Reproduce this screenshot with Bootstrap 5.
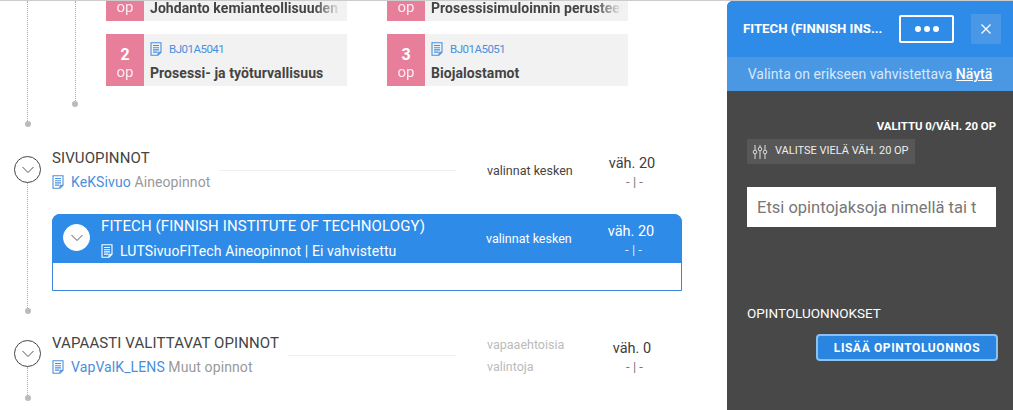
<!DOCTYPE html>
<html lang="fi">
<head>
<meta charset="UTF-8">
<meta name="viewport" content="width=device-width">
<link href="https://cdn.jsdelivr.net/npm/bootstrap@5.3.3/dist/css/bootstrap.min.css" rel="stylesheet">
<title>Opintosuunnitelma</title>
<style>
  html, body { height: 410px; overflow: hidden; }
  body { font-family: Roboto, "Liberation Sans", sans-serif; color: #444; border-top: 1px solid #ccc; background: #fff; }
  .plan-main { width: 727px; flex: none; }
  .plan-side { width: 286px; flex: none; height: 410px; background: #484848; border-top-left-radius: 6px; overflow: hidden; }

  .rail { flex: none; display: flex; flex-direction: column; align-items: flex-start; }
  .rail-outer { width: 52px; padding-left: 14px; }
  .rail-inner { width: 48px; padding-left: 20px; }
  .rail-line { flex: 1 1 auto; width: 0; border-left: 1px dotted #aaa; margin-left: 13px; }
  .rail-inner .rail-line { margin-left: 3px; }
  .rail-dot { width: 6px; height: 6px; border-radius: 50%; background: #bbb; margin-left: 10.5px; flex: none; }
  .rail-inner .rail-dot { margin-left: 0; }
  .circle-btn { width: 27px; height: 27px; flex: none; border: 1px solid #444; border-radius: 50%; background: #fff; color: #555; display: flex; align-items: center; justify-content: center; padding: 0; }

  .tile-wrap { margin-top: -32px; margin-left: 6px; display: grid; grid-template-columns: 241px 241px; grid-auto-rows: 52px; column-gap: 40px; row-gap: 13px; }
  .tile { height: 52px; background: #f2f2f2; display: flex; }
  .tile-op { width: 38px; flex: none; background: #e77f9b; color: #fff; text-align: center; line-height: 1; padding-top: 13px; }
  .tile-op b { display: block; font-size: 16px; margin-bottom: 1px; }
  .tile-op span { font-size: 15px; opacity: .85; }
  .tile-body { padding: 7px 6px 0 6px; min-width: 0; flex: 1; }
  .tile-code { font-size: 11.5px; letter-spacing: -.5px; color: #4a8fdc; line-height: 16px; display: flex; align-items: center; gap: 7px; }
  .tile-name { font-size: 14px; letter-spacing: .07px; font-weight: 700; line-height: 20px; margin-top: 6px; white-space: nowrap; overflow: hidden; color: #444; -webkit-mask-image: linear-gradient(90deg, #000 86%, transparent); mask-image: linear-gradient(90deg, #000 86%, transparent); }
  .tile-name.full { -webkit-mask-image: none; mask-image: none; }

  .sec-title { font-size: 15px; letter-spacing: .1px; line-height: 24px; color: #444; white-space: nowrap; }
  .sec-sub { font-size: 14px; letter-spacing: .1px; line-height: 24px; color: #999; display: flex; align-items: center; gap: 7px; white-space: nowrap; }
  .sec-sub a { color: #4a8fdc; text-decoration: none; }
  .sec-rule { flex: 1; border-top: 1px solid #eee; margin: 24px 0 0 9px; align-self: flex-start; }
  .sec-info { width: 404px; flex: none; display: flex; }
  .sec-state { font-size: 12.5px; margin-left: 31px; width: 113px; flex: none; line-height: 22px; }
  .sec-state.muted { color: #bbb; }
  .sec-val { width: 64px; flex: none; text-align: center; font-size: 14.5px; line-height: 20px; color: #3c3c3c; margin-top: 8px; }
  .sec-val small { display: block; font-size: 13px; line-height: 15px; color: #777; padding-left: 5px; }

  .fi-card { margin-top: 20px; width: 630px; border: 1px solid #3a85d8; border-radius: 8px 8px 0 0; height: 77px; }
  .fi-head { background: #2f8be8; color: #fff; height: 49px; margin: -1px -1px 0; border-radius: 8px 8px 0 0; display: flex; padding-left: 11px; }
  .fi-head .circle-btn { margin-top: 10px; border-color: #fff; margin-right: 11px; }
  .fi-info { flex: 1; min-width: 0; }
  .fi-info .sec-title { color: #fff; line-height: 25px; }
  .fi-info .sec-sub { color: #fff; line-height: 24px; }
  .fi-head .sec-state { margin-left: 0; align-self: center; color: #fff; }
  .fi-head .sec-val { margin-top: 0; margin-right: 19px; padding-top: 1px; align-self: center; color: #fff; }
  .fi-head .sec-val small { color: #dceaf9; }

  .side-head { height: 56px; background: #2f8be8; display: flex; align-items: center; padding: 0 12px 0 16px; color: #fff; }
  .side-title { font-size: 13.2px; font-weight: 700; width: 156px; flex: none; white-space: nowrap; }
  .more-btn { width: 55px; height: 28px; border: 2px solid #fff; border-radius: 2px; background: transparent; color: #fff; display: flex; align-items: center; justify-content: center; gap: 3px; padding: 0; }
  .more-btn i { width: 6px; height: 6px; border-radius: 50%; background: #fff; display: block; }
  .close-btn { width: 30px; height: 30px; margin-left: 17px; border: 0; background: #4a97e6; display: flex; align-items: center; justify-content: center; padding: 0; }
  .side-note { height: 34px; background: #4a97e4; color: #d6e8fb; font-size: 14px; letter-spacing: .02px; text-align: center; line-height: 35px; }
  .side-note a { color: #fff; font-weight: 500; }
  .side-body { padding: 27px 17px 0 20px; color: #fff; }
  .side-count { font-size: 11.4px; font-weight: 700; text-align: right; line-height: 16px; }
  .side-chip { display: inline-flex; align-items: center; gap: 7px; height: 25px; background: #575757; font-size: 11px; padding: 0 6px 0 5px; margin-top: 5px; color: #eee; vertical-align: top; }
  .side-search { display: block; margin-top: 23px; width: 249px; height: 40px; border: 0; border-radius: 0; padding: 0 20px 0 10px; font-family: inherit; font-size: 16.5px; background: #fff; }
  .side-search::placeholder { color: #777; opacity: 1; }
  .side-drafts { font-size: 13.5px; margin-top: 76px; line-height: 20px; }
  .draft-btn { display: block; margin: 11px -2px 0 auto; width: 182px; height: 27px; background: #2a85e0; border: 2px solid #8cc0ee; border-radius: 4px; color: #fff; font-size: 12px; font-weight: 700; letter-spacing: .6px; line-height: 1; padding: 0; }
</style>
</head>
<body class="d-flex">
<svg width="0" height="0" class="position-absolute">
  <symbol id="doc" viewBox="0 0 12 14"><path d="M1 .8h10v9.4L8 13.2H1zM3 3.5h6M3 5.7h6M3 7.9h6M3 10.1h4M11 10.2H8v3" fill="none" stroke="currentColor" stroke-width="1.1"/></symbol>
  <symbol id="chev" viewBox="0 0 14 8"><path d="M1.5 1l5.5 5.5L12.5 1" fill="none" stroke="currentColor" stroke-width="1"/></symbol>
</svg>

<main class="plan-main">
  <div class="d-flex" style="height:126px">
    <div class="rail rail-outer"><div class="rail-line"></div><div class="rail-dot"></div></div>
    <div class="flex-grow-1">
      <div class="d-flex" style="height:106px">
        <div class="rail rail-inner"><div class="rail-line"></div><div class="rail-dot"></div></div>
        <div class="tile-wrap">
          <div class="tile"><div class="tile-op"><b>2</b><span>op</span></div><div class="tile-body"><div class="tile-code"><svg width="12" height="14"><use href="#doc"/></svg>BJ01A5031</div><div class="tile-name">Johdanto kemianteollisuuden perusteisiin</div></div></div>
          <div class="tile"><div class="tile-op"><b>3</b><span>op</span></div><div class="tile-body"><div class="tile-code"><svg width="12" height="14"><use href="#doc"/></svg>BJ01A5032</div><div class="tile-name">Prosessisimuloinnin perusteet ja harjoitukset</div></div></div>
          <div class="tile"><div class="tile-op"><b>2</b><span>op</span></div><div class="tile-body"><div class="tile-code"><svg width="12" height="14"><use href="#doc"/></svg>BJ01A5041</div><div class="tile-name full">Prosessi- ja työturvallisuus</div></div></div>
          <div class="tile"><div class="tile-op"><b>3</b><span>op</span></div><div class="tile-body"><div class="tile-code"><svg width="12" height="14"><use href="#doc"/></svg>BJ01A5051</div><div class="tile-name full">Biojalostamot</div></div></div>
        </div>
      </div>
    </div>
  </div>

  <section class="d-flex" style="margin-top:19px;height:168px">
    <div class="rail rail-outer" style="padding-top:10px"><button class="circle-btn" aria-label="Avaa"><svg width="14" height="8"><use href="#chev"/></svg></button><div class="rail-line"></div><div class="rail-dot"></div></div>
    <div>
      <div class="d-flex align-items-start">
        <div class="sec-info">
          <div><div class="sec-title">SIVUOPINNOT</div><div class="sec-sub"><svg width="12" height="14" style="color:#4a8fdc"><use href="#doc"/></svg><span><a href="#">KeKSivuo</a> Aineopinnot</span></div></div>
          <div class="sec-rule"></div>
        </div>
        <div class="sec-state" style="margin-top:14px">valinnat kesken</div>
        <div class="sec-val">väh. 20<small>- | -</small></div>
      </div>
      <div class="fi-card">
        <div class="fi-head">
          <button class="circle-btn" aria-label="Avaa"><svg width="14" height="8"><use href="#chev"/></svg></button>
          <div class="fi-info"><div class="sec-title">FITECH (FINNISH INSTITUTE OF TECHNOLOGY)</div><div class="sec-sub"><svg width="12" height="14"><use href="#doc"/></svg><span>LUTSivuoFITech Aineopinnot | Ei vahvistettu</span></div></div>
          <div class="sec-state">valinnat kesken</div>
          <div class="sec-val">väh. 20<small>- | -</small></div>
        </div>
      </div>
    </div>
  </section>

  <section class="d-flex" style="margin-top:17px;height:70px">
    <div class="rail rail-outer" style="padding-top:9px"><button class="circle-btn" aria-label="Avaa"><svg width="14" height="8"><use href="#chev"/></svg></button><div class="rail-line"></div><div class="rail-dot"></div></div>
    <div class="d-flex align-items-start">
      <div class="sec-info">
        <div><div class="sec-title">VAPAASTI VALITTAVAT OPINNOT</div><div class="sec-sub"><svg width="12" height="14" style="color:#4a8fdc"><use href="#doc"/></svg><span><a href="#">VapValK_LENS</a> Muut opinnot</span></div></div>
        <div class="sec-rule"></div>
      </div>
      <div class="sec-state muted" style="margin-top:3px">vapaaehtoisia<br>valintoja</div>
      <div class="sec-val">väh. 0<small>- | -</small></div>
    </div>
  </section>
</main>

<aside class="plan-side">
  <div class="side-head">
    <div class="side-title">FITECH (FINNISH INS...</div>
    <button class="more-btn" aria-label="Lisää"><i></i><i></i><i></i></button>
    <button class="close-btn" aria-label="Sulje"><svg width="12" height="12" viewBox="0 0 12 12"><path d="M1.5 1.5l9 9M10.5 1.5l-9 9" stroke="#fff" stroke-width="1.2"/></svg></button>
  </div>
  <div class="side-note">Valinta on erikseen vahvistettava <a href="#">Näytä</a></div>
  <div class="side-body">
    <div class="side-count">VALITTU 0/VÄH. 20 OP</div>
    <div class="side-chip"><svg width="16" height="14" viewBox="0 0 16 14" fill="none" stroke="#ddd"><path d="M3 0v5M3 9v5M8 0v2M8 6v8M13 0v5M13 9v5"/><circle cx="3" cy="7" r="1.8"/><circle cx="8" cy="4" r="1.8"/><circle cx="13" cy="7" r="1.8"/></svg>VALITSE VIELÄ VÄH. 20 OP</div>
    <input class="side-search" type="text" placeholder="Etsi opintojaksoja nimellä tai tunnuksella">
    <div class="side-drafts">OPINTOLUONNOKSET</div>
    <button class="draft-btn">LISÄÄ OPINTOLUONNOS</button>
  </div>
</aside>
<script src="https://cdn.jsdelivr.net/npm/bootstrap@5.3.3/dist/js/bootstrap.bundle.min.js"></script>
</body>
</html>
